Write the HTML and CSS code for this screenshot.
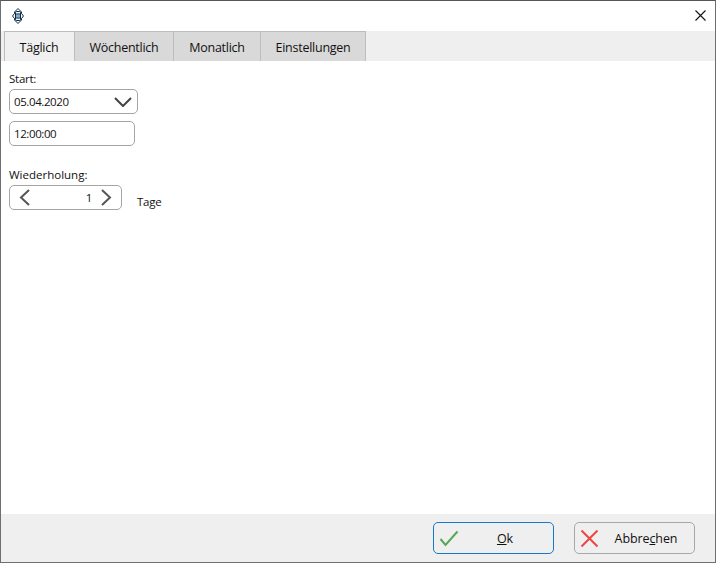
FILE: index.html
```html
<!DOCTYPE html>
<html lang="de">
<head>
<meta charset="utf-8">
<title>Täglich</title>
<link rel="stylesheet" href="styles.css">
</head>
<body>
<div class="window">
  <header class="titlebar">
    <svg class="app-icon" width="12" height="16" viewBox="0 0 12 16">
      <path d="M6 .5 9.500 4 V5.500 L11.500 8 9.500 10.500 V12 L6 15.500 2.500 12 V10.500 L.5 8 2.500 5.500 V4Z" fill="#fff" stroke="#10243c" stroke-width="1"/>
      <rect x="3.500" y="3.500" width="5" height="9" rx="1" fill="#e8f4fb" stroke="#10243c" stroke-width="1"/>
      <rect x="4" y="6.500" width="4" height="3" fill="#62b3e8"/>
      <path d="M3.500 6H8.500M3.500 10H8.500" stroke="#10243c" stroke-width="1"/>
    </svg>
    <svg class="close-icon" width="11" height="11" viewBox="0 0 11 11">
      <path d="M.5.5 10.500 10.500M10.500.5.5 10.500" stroke="#111" stroke-width="1.100" fill="none"/>
    </svg>
  </header>
  <nav class="tabs">
    <div class="tab tab-active tab-daily">Täglich</div>
    <div class="tab tab-weekly">Wöchentlich</div>
    <div class="tab tab-monthly">Monatlich</div>
    <div class="tab tab-settings">Einstellungen</div>
  </nav>
  <main class="content">
    <label class="field-label">Start:</label>
    <div class="input date-input">
      <span>05.04.2020</span>
      <svg width="18" height="10" viewBox="0 0 18 10"><path d="M1 1 9 9 17 1" stroke="#444" stroke-width="2" fill="none"/></svg>
    </div>
    <div class="input time-input"><span>12:00:00</span></div>
    <label class="field-label repeat-label">Wiederholung:</label>
    <div class="repeat-row">
      <div class="input spinner">
        <svg width="11" height="17" viewBox="0 0 11 17"><path d="M10 1 2 8.500 10 16" stroke="#555" stroke-width="2" fill="none"/></svg>
        <span class="spin-value">1</span>
        <svg width="11" height="17" viewBox="0 0 11 17"><path d="M1 1 9 8.500 1 16" stroke="#555" stroke-width="2" fill="none"/></svg>
      </div>
      <span class="unit">Tage</span>
    </div>
  </main>
  <footer class="footer">
    <button class="btn btn-ok" type="button">
      <svg width="20" height="17" viewBox="0 0 20 17"><path d="M1.500 9 6.500 15 18.500 1.500" stroke="#55a75a" stroke-width="2" fill="none"/></svg>
      <span class="btn-text btn-text-ok"><u>O</u>k</span>
    </button>
    <button class="btn btn-cancel" type="button">
      <svg width="19" height="19" viewBox="0 0 19 19"><path d="M1.500 1.500 17.500 17.500M17.500 1.500 1.500 17.500" stroke="#ee4444" stroke-width="2" fill="none"/></svg>
      <span class="btn-text btn-text-cancel">Abbre<u>c</u>hen</span>
    </button>
  </footer>
</div>
</body>
</html>
```
FILE: styles.css
```css
* { box-sizing: border-box; }
html, body { margin: 0; height: 100%; }
body {
  font-family: "Open Sans", "Noto Sans", sans-serif;
  font-size: 12px;
  color: #111;
  background: #fff;
}
.window {
  width: 716px;
  height: 563px;
  border: 1px solid #6e6e6e;
  border-top-color: #555;
  display: flex;
  flex-direction: column;
  background: #fff;
}
.titlebar {
  height: 30px;
  flex: none;
  display: flex;
  align-items: center;
  justify-content: space-between;
  padding: 0 9px 1px 11px;
}
.tabs {
  height: 30px;
  flex: none;
  display: flex;
  align-items: stretch;
  background: #efefef;
  padding-left: 3px;
}
.tab {
  display: flex;
  align-items: center;
  justify-content: center;
  background: #d9d9d9;
  border: 1px solid #bdbdbd;
  border-bottom: 0;
  border-left: 0;
  padding-top: 2px;
  font-size: 12.5px;
  letter-spacing: -0.25px;
}
.tab-active { background: #f0f0f0; border-left: 1px solid #bdbdbd; }
.tab-daily { width: 71px; padding-right: 1px; }
.tab-weekly { width: 99px; }
.tab-monthly { width: 87px; }
.tab-settings { width: 105px; }
.content {
  flex: 1;
  padding: 10px 0 0 8px;
  display: flex;
  flex-direction: column;
  align-items: flex-start;
  font-size: 11.5px;
  letter-spacing: -0.25px;
}
.field-label { line-height: 16px; height: 16px; }
.input {
  height: 25px;
  border: 1px solid #a5a5a5;
  border-radius: 5px;
  display: flex;
  align-items: center;
  background: #fff;
}
.date-input {
  width: 129px;
  margin-top: 2px;
  padding: 0 5px 0 4px;
  justify-content: space-between;
  letter-spacing: -0.4px;
}
.time-input {
  width: 126px;
  margin-top: 7px;
  padding: 0 4px;
  letter-spacing: -0.4px;
}
.repeat-label { margin-top: 21px; letter-spacing: 0; }
.repeat-row { display: flex; margin-top: 2px; }
.spinner {
  width: 113px;
  padding: 0 9px;
  justify-content: space-between;
}
.spin-value { margin-left: auto; margin-right: 9px; }
.unit { margin: 9px 0 0 15px; }
.footer {
  height: 48px;
  flex: none;
  background: #efefef;
  display: flex;
  align-items: flex-start;
  justify-content: flex-end;
  gap: 20px;
  padding: 8px 20px 0 0;
}
.btn {
  height: 32px;
  width: 121px;
  border: 1px solid #a8a8a8;
  border-radius: 5px;
  background: #efefef;
  font: inherit;
  color: #111;
  display: flex;
  align-items: center;
  padding: 0 0 0 5px;
  font-size: 12.5px;
  letter-spacing: -0.1px;
}
.btn-ok { border-color: #1979c9; }
.btn-text { flex: 1; text-align: center; }
.btn-text-ok { padding-right: 2px; }
.btn-text-cancel { padding-right: 1px; }
```
